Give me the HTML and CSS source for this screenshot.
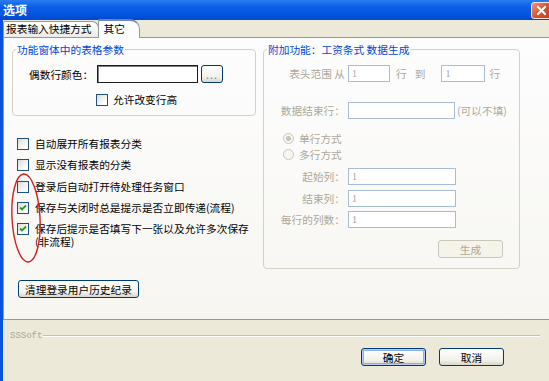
FILE: index.html
```html
<!DOCTYPE html>
<html lang="zh-CN">
<head>
    <meta charset="UTF-8">
    <meta name="viewport" content="width=device-width, initial-scale=1.0">
    <title>选项</title>
    <link rel="stylesheet" href="styles.css">
</head>
<body>
    <div class="window">
        <div class="titlebar">
            <span class="title">选项</span>
            <span class="close-btn">
                <svg width="11" height="11" viewBox="0 0 11 11"><path d="M2 2 L9 9 M9 2 L2 9" stroke="#fff" stroke-width="2" stroke-linecap="square"/></svg>
            </span>
        </div>

        <div class="frame">
            <div class="tabs">
                <div class="tab">报表输入快捷方式</div>
                <div class="tab tab-active">其它</div>
            </div>

            <div class="page">
                <div class="left-col">
                    <fieldset class="group group-grid">
                        <legend>功能窗体中的表格参数</legend>
                        <div class="group-body">
                            <div class="color-row">
                                <span class="color-label">偶数行颜色：</span>
                                <span class="color-input"></span>
                                <span class="btn dots-btn">...</span>
                            </div>
                            <div class="check-row row-height">
                                <span class="checkbox"></span>
                                <span>允许改变行高</span>
                            </div>
                        </div>
                    </fieldset>

                    <ul class="check-list">
                        <li><span class="checkbox"></span><span>自动展开所有报表分类</span></li>
                        <li><span class="checkbox"></span><span>显示没有报表的分类</span></li>
                        <li><span class="checkbox"></span><span>登录后自动打开待处理任务窗口</span></li>
                        <li>
                            <span class="checkbox checked">
                                <svg width="10" height="10" viewBox="0 0 10 10"><path d="M2 4.5 L4 6.5 L8 2.5" fill="none" stroke="#21a121" stroke-width="1.8"/></svg>
                            </span>
                            <span>保存与关闭时总是提示是否立即传递(流程)</span>
                        </li>
                        <li>
                            <span class="checkbox checked">
                                <svg width="10" height="10" viewBox="0 0 10 10"><path d="M2 4.5 L4 6.5 L8 2.5" fill="none" stroke="#21a121" stroke-width="1.8"/></svg>
                            </span>
                            <span class="wrap-text">保存后提示是否填写下一张以及允许多次保存(非流程)</span>
                        </li>
                    </ul>

                    <span class="btn clear-btn">清理登录用户历史纪录</span>
                </div>

                <fieldset class="group group-extra">
                    <legend>附加功能：工资条式 数据生成</legend>
                    <div class="extra-body">
                        <div class="field-row row-head">
                            <span class="field-label">表头范围 从</span>
                            <span class="field-input w-from">1</span>
                            <span class="unit">行</span>
                            <span class="to">到</span>
                            <span class="field-input w-to">1</span>
                            <span class="unit-end">行</span>
                        </div>
                        <div class="field-row row-end">
                            <span class="field-label">数据结束行：</span>
                            <span class="field-input w-end">&nbsp;</span>
                            <span class="hint">(可以不填)</span>
                        </div>
                        <div class="radio-row radio-first">
                            <span class="radio selected"></span>
                            <span>单行方式</span>
                        </div>
                        <div class="radio-row radio-second">
                            <span class="radio"></span>
                            <span>多行方式</span>
                        </div>
                        <div class="field-row row-c">
                            <span class="field-label">起始列：</span>
                            <span class="field-input w-col">1</span>
                        </div>
                        <div class="field-row row-d">
                            <span class="field-label">结束列：</span>
                            <span class="field-input w-col">1</span>
                        </div>
                        <div class="field-row row-e">
                            <span class="field-label">每行的列数：</span>
                            <span class="field-input w-col">1</span>
                        </div>
                        <span class="btn btn-disabled gen-btn">生成</span>
                    </div>
                </fieldset>
            </div>

            <div class="footer">
                <div class="brand-row">
                    <span class="brand">SSSoft</span>
                    <span class="rule"></span>
                </div>
                <div class="footer-buttons">
                    <span class="btn btn-default dialog-btn">确定</span>
                    <span class="btn dialog-btn">取消</span>
                </div>
            </div>
        </div>

        <!-- hand-drawn red marker over the last checkboxes -->
        <svg class="marker" width="36" height="96" viewBox="0 0 36 96">
            <ellipse cx="16" cy="46" rx="14" ry="44" fill="none" stroke="#d42020" stroke-width="1.4" transform="rotate(-3 16 46)"/>
        </svg>
    </div>
</body>
</html>
```

FILE: styles.css
```css
* {
    box-sizing: border-box;
}

body {
    margin: 0;
    overflow: hidden;
    background: #ece9d8;
    font-family: "Noto Sans CJK SC", "Liberation Sans", sans-serif;
    font-size: 10.7px;
    color: #000;
}

.window {
    position: relative;
    width: 552px;
    height: 381px;
    display: flex;
    flex-direction: column;
}

.titlebar {
    height: 20px;
    display: flex;
    align-items: center;
    justify-content: space-between;
    padding-left: 3px;
    background: linear-gradient(#2a7cf0, #0a5fe6 35%, #0353de 75%, #0247c8);
    color: #fff;
}

.title {
    font-weight: bold;
    font-size: 12px;
    line-height: 14px;
}

.close-btn {
    width: 21px;
    height: 17px;
    display: flex;
    align-items: center;
    justify-content: center;
    border: 1px solid #f4e3dc;
    border-radius: 3px;
    background: linear-gradient(135deg, #ee9a7e, #d9532e 50%, #c43a16);
}

.frame {
    flex: 1;
    display: flex;
    flex-direction: column;
    border-left: 3px solid #0a52dc;
    background: #ece9d8;
}

/* tabs */
.tabs {
    height: 17px;
    display: flex;
    align-items: flex-end;
}

.tab {
    height: 16px;
    padding: 0 6px 0 2px;
    line-height: 14px;
    border: 1px solid #919b9c;
    border-bottom: none;
    border-radius: 2px 7px 0 0;
    background: linear-gradient(#fefefe, #ecebe4);
    white-space: nowrap;
}

.tab-active {
    position: relative;
    z-index: 1;
    height: 19px;
    margin-bottom: -1px;
    margin-left: -1px;
    padding: 0 14px 0 5px;
    line-height: 16px;
    border-top: 2px solid #6f86ad;
    border-radius: 2px 10px 0 0;
    background: #fdfdfe;
}

/* tab page */
.page {
    height: 283px;
    display: flex;
    gap: 7px;
    padding: 5px 0 0 8px;
    border: 1px solid #919b9c;
    border-right: none;
    background: linear-gradient(#fdfdfe, #f7f6f1);
}

.left-col {
    width: 244px;
    display: flex;
    flex-direction: column;
    align-items: flex-start;
}

.group {
    margin: 0;
    padding: 0;
    min-inline-size: 0;
    border: 1px solid #d5d2c4;
    border-radius: 4px;
}

.group legend,
.group-extra legend {
    margin-left: 3px;
    padding: 0 1px;
    line-height: 13px;
    color: #0046d5;
}

.group-grid {
    width: 244px;
}

.group-body {
    padding: 9px 0 9px 16px;
}

.color-row {
    display: flex;
    align-items: center;
    height: 18px;
}

.color-label {
    width: 68px;
    color: #000;
}

.color-input {
    width: 101px;
    height: 18px;
    border: 1px solid #1c1c1c;
    box-shadow: inset 1px 1px 0 #808080;
    background: #fff;
}

.dots-btn {
    width: 22px;
    height: 18px;
    margin-left: 3px;
    color: #6a7a92;
    letter-spacing: 1px;
}

.check-row {
    display: flex;
    align-items: center;
    gap: 5px;
    margin-top: 10px;
    margin-left: 67px;
    height: 13px;
}

.checkbox {
    width: 12px;
    height: 12px;
    flex: none;
    display: flex;
    align-items: center;
    justify-content: center;
    border: 1px solid #1c5180;
    background: linear-gradient(135deg, #dcdcd5, #fff 80%);
}

.check-list {
    list-style: none;
    margin: 17px 0 0 5px;
    padding: 0;
}

.check-list li {
    display: flex;
    align-items: flex-start;
    gap: 6px;
    min-height: 21.3px;
    padding-top: 4px;
    line-height: 13px;
}

.check-list .checkbox {
    margin-top: 1px;
}

.wrap-text {
    width: 218px;
}

/* buttons */
.btn {
    display: inline-flex;
    align-items: center;
    justify-content: center;
    height: 18px;
    border: 1px solid #003c74;
    border-radius: 3px;
    background: linear-gradient(#fefefe, #f2f1ea 70%, #d9d7cb);
    white-space: nowrap;
}

.clear-btn {
    width: 121px;
    margin-top: 32px;
    margin-left: 6px;
}

.btn-default {
    box-shadow: inset 0 0 0 1px #b6ccf2, inset 0 0 0 2px #8fb0e6;
}

.btn-disabled {
    border-color: #c9c7ba;
    background: #f5f4ea;
    color: #aca899;
}

/* extra group */
.group-extra {
    width: 257px;
    align-self: flex-start;
}

.extra-body {
    padding: 0 0 10px 0;
    color: #aca899;
}

.field-row {
    display: flex;
    align-items: center;
    height: 17px;
}

.field-label {
    width: 81px;
    margin-right: 3px;
    text-align: right;
    white-space: nowrap;
}

.field-input {
    height: 17px;
    padding-left: 3px;
    border: 1px solid #a9bdd2;
    background: #fff;
    color: #a4a4a4;
    font-family: "Liberation Serif", serif;
    font-size: 10px;
    line-height: 15px;
}

.w-from { width: 42px; }
.w-to { width: 44px; }
.w-end { width: 107px; }
.w-col { width: 108px; }

.unit { margin-left: 6px; }
.to { margin-left: 8px; margin-right: 16px; }
.unit-end { margin-left: 4px; }
.hint { margin-left: 2px; }

.row-head { margin-top: 9px; }
.row-end { margin-top: 20px; }
.row-c { margin-top: 7px; }
.row-d { margin-top: 5px; }
.row-e { margin-top: 4px; }

.radio-row {
    display: flex;
    align-items: center;
    gap: 5px;
    height: 13px;
    padding-left: 19px;
}

.radio-first { margin-top: 13px; }
.radio-second { margin-top: 3px; }

.radio {
    width: 11px;
    height: 11px;
    display: flex;
    align-items: center;
    justify-content: center;
    border: 1px solid #c9c7ba;
    border-radius: 50%;
    background: #f7f6f0;
}

.radio.selected::after {
    content: "";
    width: 5px;
    height: 5px;
    border-radius: 50%;
    background: #c6c4b8;
}

.gen-btn {
    width: 65px;
    margin-top: 12px;
    margin-left: 174px;
}

/* footer */
.footer {
    flex: 1;
    display: flex;
    flex-direction: column;
}

.brand-row {
    display: flex;
    align-items: center;
    height: 12px;
    margin-top: 10px;
    padding: 0 12px 0 7px;
}

.brand {
    font-family: "Liberation Mono", monospace;
    font-size: 9px;
    color: #a9a79c;
}

.rule {
    flex: 1;
    margin-left: 1px;
    border-top: 1px solid #c5c2b2;
    border-bottom: 1px solid #fff;
}

.footer-buttons {
    display: flex;
    justify-content: flex-end;
    gap: 13px;
    margin-top: 6px;
    padding-right: 48px;
}

.dialog-btn {
    width: 65px;
}

.marker {
    position: absolute;
    left: 10px;
    top: 172px;
}
```
